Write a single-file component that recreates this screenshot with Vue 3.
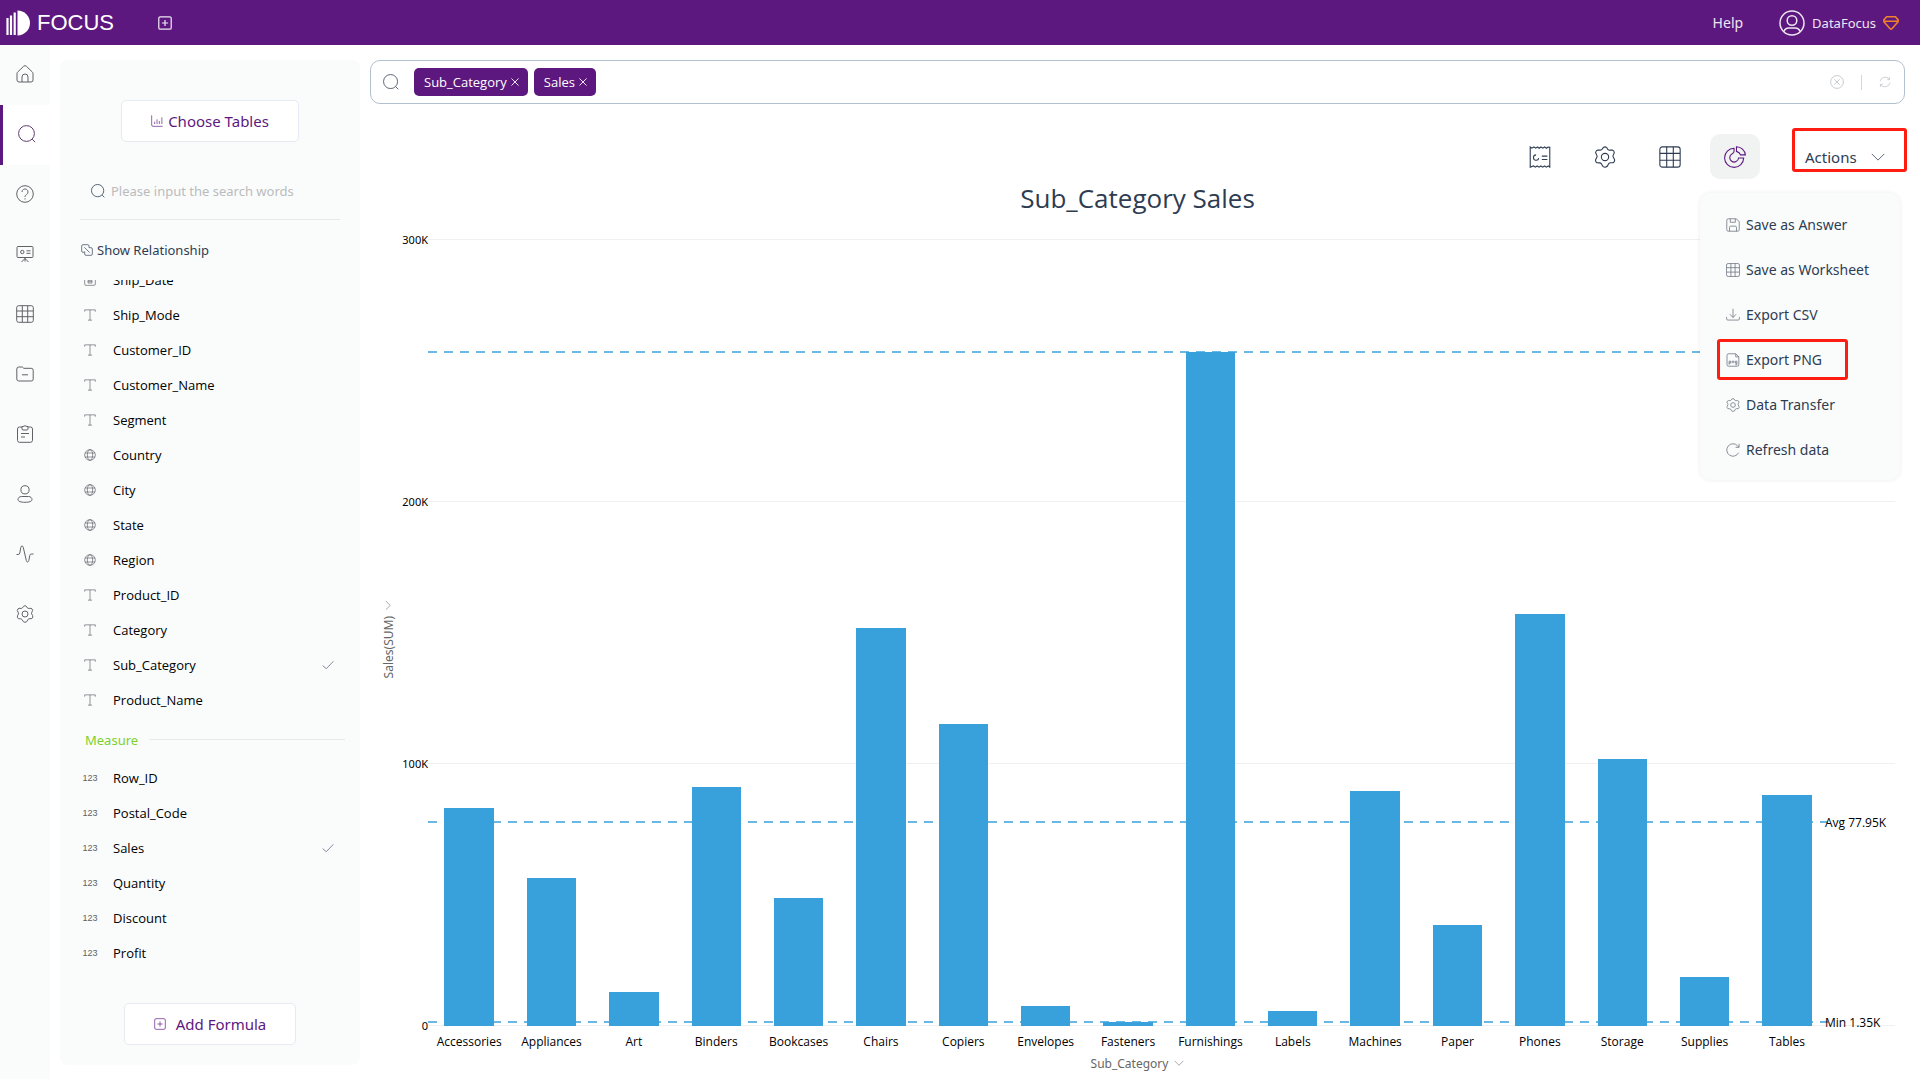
<script setup>
import { ref } from 'vue'

const railItems = [
  { icon: 'home', label: 'Home' },
  { icon: 'search', label: 'Search', active: true },
  { icon: 'help', label: 'Help center' },
  { icon: 'board', label: 'Dashboards' },
  { icon: 'grid', label: 'Data tables' },
  { icon: 'folder', label: 'Resources' },
  { icon: 'clipboard', label: 'Tasks' },
  { icon: 'user', label: 'Users' },
  { icon: 'pulse', label: 'Monitoring' },
  { icon: 'gear', label: 'Settings' },
]

const attributes = [
  { name: 'Ship_Date', type: 'date' },
  { name: 'Ship_Mode', type: 'text' },
  { name: 'Customer_ID', type: 'text' },
  { name: 'Customer_Name', type: 'text' },
  { name: 'Segment', type: 'text' },
  { name: 'Country', type: 'globe' },
  { name: 'City', type: 'globe' },
  { name: 'State', type: 'globe' },
  { name: 'Region', type: 'globe' },
  { name: 'Product_ID', type: 'text' },
  { name: 'Category', type: 'text' },
  { name: 'Sub_Category', type: 'text', used: true },
  { name: 'Product_Name', type: 'text' },
]

const measures = [
  { name: 'Row_ID' },
  { name: 'Postal_Code' },
  { name: 'Sales', used: true },
  { name: 'Quantity' },
  { name: 'Discount' },
  { name: 'Profit' },
]

const tags = ['Sub_Category', 'Sales']
const keyword = ref('')
const query = ref('')

const tools = [
  { icon: 'receipt', label: 'Summary' },
  { icon: 'gear', label: 'Chart settings' },
  { icon: 'grid', label: 'Table view' },
  { icon: 'pie', label: 'Chart view', active: true },
]

const actions = [
  { icon: 'save', label: 'Save as Answer' },
  { icon: 'grid', label: 'Save as Worksheet' },
  { icon: 'download', label: 'Export CSV' },
  { icon: 'png', label: 'Export PNG', marked: true },
  { icon: 'gear', label: 'Data Transfer' },
  { icon: 'reload', label: 'Refresh data' },
]

// Sales per sub-category, in thousands
const bars = [
  { name: 'Accessories', value: 83.3 },
  { name: 'Appliances', value: 56.4 },
  { name: 'Art', value: 13.1 },
  { name: 'Binders', value: 91.1 },
  { name: 'Bookcases', value: 48.9 },
  { name: 'Chairs', value: 152.1 },
  { name: 'Copiers', value: 115.3 },
  { name: 'Envelopes', value: 7.5 },
  { name: 'Fasteners', value: 1.35 },
  { name: 'Furnishings', value: 257.2 },
  { name: 'Labels', value: 5.7 },
  { name: 'Machines', value: 89.6 },
  { name: 'Paper', value: 38.5 },
  { name: 'Phones', value: 157.2 },
  { name: 'Storage', value: 102 },
  { name: 'Supplies', value: 18.7 },
  { name: 'Tables', value: 88.3 },
]

const axisMax = 300
const ticks = [
  { value: 300, label: '300K' },
  { value: 200, label: '200K' },
  { value: 100, label: '100K' },
  { value: 0, label: '0' },
]
const guides = [
  { value: 257.2, label: '' },
  { value: 77.95, label: 'Avg 77.95K' },
  { value: 1.35, label: 'Min 1.35K' },
]
const pct = (v) => `${(v / axisMax) * 100}%`
</script>

<template>
  <svg class="sprite" aria-hidden="true">
    <symbol id="i-home" viewBox="0 0 18 18"><path d="M1.5 7.2 7.6 1.3a2 2 0 0 1 2.8 0l6.1 5.9q.5.5.5 1.2v6.600a2 2 0 0 1-2 2H3a2 2 0 0 1-2-2V8.400q0-.7.5-1.200ZM6 17v-5a3 3 0 0 1 6 0v5" /></symbol>
    <symbol id="i-search" viewBox="0 0 18 18"><circle cx="8.500" cy="8.500" r="7.900" /><path d="m14.200 14.200 3 3" /></symbol>
    <symbol id="i-help" viewBox="0 0 18 18"><circle cx="9" cy="9" r="8.300" /><path d="M6 7a3 3 0 1 1 4.600 2.500C9.400 10.300 9 10.700 9 12M9 13.300v1.200" /></symbol>
    <symbol id="i-board" viewBox="0 0 18 18"><rect x="1" y="1.500" width="16" height="11" rx="1" /><circle cx="6.300" cy="7" r="1.700" /><path d="M10.500 5.800h4M10.500 8.300h4M9 12.500v4M9 13.500l-3.500 3.500M9 13.500l3.500 3.500" /></symbol>
    <symbol id="i-grid" viewBox="0 0 18 18"><rect x=".7" y=".7" width="16.600" height="16.600" rx="2" /><path d="M.7 6h16.600M.7 11.700h16.600M6.300.7v16.600M11.700.7v16.600" /></symbol>
    <symbol id="i-folder" viewBox="0 0 18 18"><path d="M.8 4a2 2 0 0 1 2-2h3.500l1.500 1.300h7.400a2 2 0 0 1 2 2V14a2 2 0 0 1-2 2H2.800a2 2 0 0 1-2-2ZM6 9.800h6" /></symbol>
    <symbol id="i-clipboard" viewBox="0 0 18 18"><path d="M6 2H3.500a2 2 0 0 0-2 2v11.300a2 2 0 0 0 2 2h11a2 2 0 0 0 2-2V4a2 2 0 0 0-2-2H12M6 1.500l1 0q2-1.500 4 0h1V4q-.2 1-1 1H7Q6 5 6 4ZM5 8.500h8M5 12h4" /></symbol>
    <symbol id="i-user" viewBox="0 0 18 18"><circle cx="9" cy="4.800" r="4.100" /><path d="M5.500 11.500h7c2.200 0 3.500 1.500 3.500 3 0 2-3 2.800-7 2.800s-7-.8-7-2.800c0-1.500 1.300-3 3.500-3Z" /></symbol>
    <symbol id="i-pulse" viewBox="0 0 18 18"><path d="M.5 9.500h1.700q1.300 0 1.600-1.500l1-5.500Q5 1 6 1t1.300 1.500l3 13Q10.600 17 11.500 17t1.300-1.500l1-5q.2-1.500 1.700-1.500h2" /></symbol>
    <symbol id="i-gear" viewBox="0 0 18 18"><circle cx="9" cy="9" r="3" /><path d="M7.600 1.300q1.400-1.200 2.800 0l1 1.700q.8.600 1.700.4l1.900-.1q1.600.6 1.600 2.200L15.800 7.300q-.5.800-.1 1.700l.9 1.600q.8 1.500-.7 3l-1.900.1q-1.300-.1-1.900.6l-1.300 2.300q-1.800 1.500-3.500 0L6 14.500q-.7-.8-1.600-.7l-2-.1Q.8 12.600 1.500 10.800l.9-1.800q.3-.9-.2-1.700L1.300 5.500Q1.600 3.600 3 3.300l2 .1q.9 0 1.500-.6Z" /></symbol>
    <symbol id="i-pie" viewBox="0 0 18 18"><path d="M8.200 1.900A7.800 7.800 0 1 0 16.100 9.800h-4.200a3.600 3.600 0 1 1-5.200-3.500q1.500-.7 1.500-1.800ZM10.200.6v3.800q2.700.8 3.300 2.900h4A7.500 7.500 0 0 0 10.200.6Z" /></symbol>
    <symbol id="i-receipt" viewBox="0 0 18 18"><path d="M1 17.300V.8l1.300 1L4 .8l1.500 1L7 .8l1.300 1 1.500-1 1.500 1 1.500-1 1.500 1 1.200-1L17 1v16.300l-1.300-1-1.500 1-1.500-1-1.500 1-1.500-1-1.500 1-1.500-1-1.500 1-1.500-1ZM5.800 7.300A2.200 2.200 0 1 0 8 10M10.500 8.300H15M10.500 11H15" /></symbol>
    <symbol id="i-save" viewBox="0 0 18 18"><path d="M3 1h10l4 3.500V15a2 2 0 0 1-2 2H3a2 2 0 0 1-2-2V3a2 2 0 0 1 2-2ZM5.500 1v4.500H12V1M4.500 17v-5q0-1.500 1.500-1.500h6q1.500 0 1.500 1.500v5" /></symbol>
    <symbol id="i-download" viewBox="0 0 18 18"><path d="M9 1v11M5 8l4 4.200L13 8M.8 11.500V14q0 1.500 1.500 1.500h13.400q1.500 0 1.500-1.500v-2.500" /></symbol>
    <symbol id="i-png" viewBox="0 0 18 18"><path d="M3 1h9.500L16.500 5v10a2 2 0 0 1-2 2H3.300a2 2 0 0 1-2-2V3A2 2 0 0 1 3 1ZM12.500 1v4h4M4 15v-4.500h2v2.500H4M8 13v-2.500h2V13M14 13h-2v-2.500h2V15h-2" /></symbol>
    <symbol id="i-reload" viewBox="0 0 18 18"><path d="M16.200 12.500A8 8 0 1 1 15 3.700l1.500 1.600M16.800 1v4.600h-4.500" /></symbol>
    <symbol id="i-sync" viewBox="0 0 18 18"><path d="M1.500 8A7.800 7.800 0 0 1 15.500 5M16.500 10A7.800 7.800 0 0 1 2.500 13M15.800 1.500v4h-3.500M2.200 16.500v-4h3.500" /></symbol>
    <symbol id="i-clear" viewBox="0 0 18 18"><circle cx="9" cy="9" r="8.200" /><path d="m5.500 5.500 7 7M12.500 5.500l-7 7" /></symbol>
    <symbol id="i-plus-box" viewBox="0 0 18 18"><rect x="1" y="1" width="16" height="16" rx="2" /><path d="M9 5v8M5 9h8" /></symbol>
    <symbol id="i-chart" viewBox="0 0 18 18"><path d="M1 .5V15q0 2 2 2h14.500M5.500 13.500V10M9 13.500V6.500M12.500 13.500V9M16.300 13.500V3.500" /></symbol>
    <symbol id="i-relation" viewBox="0 0 18 18"><path d="M5 12.500H3a2 2 0 0 1-2-2V3a2 2 0 0 1 2-2h7a2 2 0 0 1 2 2v2.500H15a2 2 0 0 1 2 2V15a2 2 0 0 1-2 2H7.500a2 2 0 0 1-2-2v-4M5 5l8 8" /></symbol>
    <symbol id="i-date" viewBox="0 0 18 18"><rect x="1" y="2.500" width="16" height="14.500" rx="2" /><path d="M1 7h16M5 .5v4M13 .5v4M6 9.500h6v4H6ZM6 11.500h6" /></symbol>
    <symbol id="i-text" viewBox="0 0 18 18"><path d="M1 4V1.300h16V4M9 1.300v15.400M6 16.700h6" /></symbol>
    <symbol id="i-globe" viewBox="0 0 18 18"><circle cx="9" cy="9" r="8" /><ellipse cx="9" cy="9" rx="4" ry="8" /><path d="M1.500 6h15M1.500 12h15" /></symbol>
    <symbol id="i-check" viewBox="0 0 18 18"><path d="m1 10 5.500 4.500L17 3.500" /></symbol>
    <symbol id="i-down" viewBox="0 0 18 18"><path d="m1 5 8 8 8-8" /></symbol>
    <symbol id="i-cross" viewBox="0 0 18 18"><path d="m1 1 16 16M17 1 1 17" /></symbol>
    <symbol id="i-avatar" viewBox="0 0 26 26"><circle cx="13" cy="13" r="12" /><circle cx="13" cy="10.500" r="4.800" /><path d="M5 21.500q1-3.500 5-3.500h6q4 0 5 3.500" /></symbol>
    <symbol id="i-gem" viewBox="0 0 18 18"><path d="M4 2h10l3 3.500v2L10 15.500q-1 1-2 0L1 7.500v-2ZM1.500 7h15" /></symbol>
  </svg>

  <div class="app">
    <header class="topbar">
      <a class="brand" href="#">
        <svg class="logo" viewBox="0 0 25 26" aria-hidden="true">
          <path d="M1.500 8v17M5 5.500V25M8.700 2.500V25" stroke="#fff" stroke-width="2.200" fill="none" />
          <path d="M11.500.5a12.500 12.500 0 0 1 0 25Z" fill="#fff" />
        </svg>
        <span>FOCUS</span>
      </a>
      <button class="bare new-tab" aria-label="New"><svg class="icon"><use href="#i-plus-box" /></svg></button>
      <a class="help" href="#">Help</a>
      <a class="account" href="#">
        <svg class="icon avatar"><use href="#i-avatar" /></svg>
        <span>DataFocus</span>
        <svg class="icon gem"><use href="#i-gem" /></svg>
      </a>
    </header>

    <div class="body">
      <nav class="rail">
        <a v-for="r in railItems" :key="r.icon" href="#" :class="{ active: r.active }" :aria-label="r.label">
          <svg class="icon"><use :href="`#i-${r.icon}`" /></svg>
        </a>
      </nav>

      <aside class="panel">
        <button class="outline choose"><svg class="icon"><use href="#i-chart" /></svg>Choose Tables</button>
        <label class="finder">
          <svg class="icon"><use href="#i-search" /></svg>
          <input v-model="keyword" type="text" placeholder="Please input the search words" />
        </label>
        <button class="bare relation"><svg class="icon"><use href="#i-relation" /></svg>Show Relationship</button>
        <div class="fields">
          <ul class="attributes">
            <li v-for="f in attributes" :key="f.name">
              <span class="type"><svg class="icon"><use :href="`#i-${f.type}`" /></svg></span>
              <span class="name">{{ f.name }}</span>
              <svg v-if="f.used" class="icon check"><use href="#i-check" /></svg>
            </li>
          </ul>
          <h2 class="group">Measure</h2>
          <ul>
            <li v-for="f in measures" :key="f.name">
              <span class="type">123</span>
              <span class="name">{{ f.name }}</span>
              <svg v-if="f.used" class="icon check"><use href="#i-check" /></svg>
            </li>
          </ul>
        </div>
        <button class="outline formula"><svg class="icon"><use href="#i-plus-box" /></svg>Add Formula</button>
      </aside>

      <main class="main">
        <div class="searchbar">
          <svg class="icon lens"><use href="#i-search" /></svg>
          <span v-for="t in tags" :key="t" class="tag">
            {{ t }}
            <button class="bare" :aria-label="`Remove ${t}`"><svg class="icon"><use href="#i-cross" /></svg></button>
          </span>
          <input v-model="query" type="text" aria-label="Search query" />
          <button class="bare" aria-label="Clear"><svg class="icon"><use href="#i-clear" /></svg></button>
          <span class="sep"></span>
          <button class="bare" aria-label="Refresh"><svg class="icon sync"><use href="#i-sync" /></svg></button>
        </div>

        <div class="toolbar">
          <button v-for="t in tools" :key="t.icon" class="bare tool" :class="{ active: t.active }" :aria-label="t.label">
            <svg class="icon"><use :href="`#i-${t.icon}`" /></svg>
          </button>
          <div class="actions">
            <button class="bare actions-button">Actions<svg class="icon"><use href="#i-down" /></svg></button>
            <div class="menu">
              <button v-for="a in actions" :key="a.label" class="bare" :class="{ marked: a.marked }">
                <svg class="icon"><use :href="`#i-${a.icon}`" /></svg>{{ a.label }}
              </button>
            </div>
          </div>
        </div>

        <h1 class="title">Sub_Category Sales</h1>

        <section class="chart">
          <button class="bare axis-y">Sales(SUM)<svg class="icon"><use href="#i-down" /></svg></button>
          <div class="plot">
            <div v-for="t in ticks" :key="t.value" class="tick" :style="{ bottom: pct(t.value) }">
              <span>{{ t.label }}</span>
            </div>
            <div class="series">
              <div v-for="b in bars" :key="b.name" class="slot">
                <div class="bar" :style="{ height: pct(b.value) }"></div>
              </div>
              <div v-for="g in guides" :key="g.value" class="guide" :style="{ bottom: pct(g.value) }">
                <span>{{ g.label }}</span>
              </div>
            </div>
          </div>
          <div class="categories">
            <span v-for="b in bars" :key="b.name">{{ b.name }}</span>
          </div>
          <button class="bare axis-x">Sub_Category<svg class="icon"><use href="#i-down" /></svg></button>
        </section>
      </main>
    </div>
  </div>
</template>

<style>
body {
  margin: 0;
  background: #fff;
}
</style>

<style scoped>
.app {
  display: flex;
  flex-direction: column;
  min-height: 100vh;
  font-family: "Noto Sans", "Open Sans", sans-serif;
  font-size: 13px;
  color: #2e3c52;
}
.fields,
.tag,
.title,
.categories,
.guide {
  font-family: "Open Sans", "Noto Sans", sans-serif;
}
.app *,
.app *::before,
.app *::after {
  box-sizing: border-box;
}
.sprite {
  position: absolute;
  width: 0;
  height: 0;
}
.icon {
  flex: none;
  width: 14px;
  height: 14px;
  fill: none;
  stroke: currentColor;
  stroke-width: 1;
}
a {
  color: inherit;
  text-decoration: none;
}
button,
input {
  font: inherit;
  color: inherit;
}
.bare {
  display: flex;
  align-items: center;
  padding: 0;
  border: 0;
  background: none;
}
ul {
  margin: 0;
  padding: 0;
  list-style: none;
}

.topbar {
  display: flex;
  align-items: center;
  height: 45px;
  padding: 0 21px 0 6px;
  background: #5d187f;
  color: #eee6f2;
}
.brand {
  display: flex;
  align-items: center;
  gap: 6px;
  color: #fff;
  font: 22px "Liberation Sans", Arial, sans-serif;
}
.logo {
  width: 25px;
  height: 26px;
}
.new-tab {
  margin-left: 44px;
}
.new-tab .icon {
  stroke-width: 1.6;
}
.help {
  margin-left: auto;
  font-size: 14px;
}
.account {
  display: flex;
  align-items: center;
  gap: 7px;
  margin-left: 36px;
}
.avatar {
  width: 26px;
  height: 26px;
  stroke-width: 1.5;
}
.gem {
  width: 16px;
  height: 16px;
  color: #f0802c;
  stroke-width: 1.8;
}

.body {
  display: flex;
  flex: 1;
}
.rail {
  flex: none;
  width: 50px;
  background: #fafcfc;
  color: #606266;
}
.rail a {
  display: flex;
  align-items: center;
  justify-content: center;
  height: 60px;
  padding-bottom: 2px;
}
.rail a.active {
  border-left: 3px solid #5d187f;
  background: #fff;
  color: #5d3a70;
}
.rail .icon {
  width: 18px;
  height: 18px;
}

.panel {
  display: flex;
  flex: none;
  flex-direction: column;
  align-items: center;
  width: 300px;
  margin: 15px 10px 14px;
  padding: 40px 15px 20px 20px;
  border-radius: 8px;
  background: #fafcfc;
}
.outline {
  display: flex;
  align-items: center;
  justify-content: center;
  height: 42px;
  margin-right: 5px;
  border: 1px solid #e6eaf2;
  border-radius: 5px;
  background: #fff;
  color: #5d187f;
  font-size: 15px;
}
.outline .icon {
  width: 12px;
  height: 12px;
}
.choose {
  gap: 5px;
  width: 178px;
}
.formula {
  gap: 10px;
  width: 172px;
  margin-top: auto;
}
.finder {
  display: flex;
  align-items: center;
  align-self: stretch;
  gap: 6px;
  height: 56px;
  margin: 22px 5px 0 0;
  padding: 0 10px 2px 11px;
  border-bottom: 1px solid #e6eaec;
}
.finder input {
  flex: 1;
  min-width: 0;
  padding: 0;
  border: 0;
  outline: 0;
  background: none;
}
.finder input::placeholder {
  color: #bbb;
}
.relation {
  align-self: stretch;
  gap: 4px;
  height: 60px;
  padding-left: 1px;
}
.relation .icon {
  width: 12px;
  height: 12px;
}
.fields {
  align-self: stretch;
  overflow: hidden;
}
.attributes {
  margin-top: -18px;
}
li {
  display: flex;
  align-items: center;
  height: 35px;
  padding: 0 11px 0 0;
  color: #000;
}
.type {
  display: flex;
  justify-content: center;
  width: 20px;
  margin-right: 13px;
  color: #5c6066;
  font: 9px "Liberation Sans", sans-serif;
}
.type .icon,
.check {
  width: 12px;
  height: 12px;
}
.name {
  flex: 1;
}
.check {
  color: #5d4570;
}
.group {
  display: flex;
  align-items: center;
  gap: 11px;
  height: 43px;
  margin: 0;
  padding: 2px 0 0 5px;
  color: #7fd02c;
  font-family: "Noto Sans", "Open Sans", sans-serif;
  font-size: 13px;
  font-weight: 400;
}
.group::after {
  content: "";
  flex: 1;
  height: 1px;
  background: #e6eaec;
}

.main {
  display: flex;
  flex: 1;
  flex-direction: column;
  min-width: 0;
  padding: 15px 15px 8px 0;
}
.searchbar {
  display: flex;
  align-items: center;
  height: 44px;
  padding: 0 13px 0 12px;
  border: 1px solid #b2c0d0;
  border-radius: 10px;
  color: #b8bcc2;
}
.lens {
  width: 16px;
  height: 16px;
  margin-right: 15px;
  color: #4c5462;
}
.tag {
  display: flex;
  align-items: center;
  gap: 4px;
  height: 28px;
  margin-right: 6px;
  padding: 0 9px 0 10px;
  border-radius: 5px;
  background: #5d187f;
  color: #fff;
}
.tag .icon {
  width: 8px;
  height: 8px;
  stroke-width: 2;
}
.searchbar input {
  flex: 1;
  min-width: 0;
  padding: 0;
  border: 0;
  outline: 0;
  background: none;
  color: #2e3c52;
}
.sep {
  width: 1px;
  height: 15px;
  margin: 0 17px;
  background: #d4d7dc;
}
.sync {
  width: 12px;
  height: 12px;
}

.toolbar {
  display: flex;
  align-items: center;
  justify-content: flex-end;
  gap: 15px;
  margin-top: 30px;
}
.tool {
  justify-content: center;
  width: 50px;
  height: 45px;
  border-radius: 10px;
}
.tool .icon {
  width: 22px;
  height: 22px;
  stroke-width: 0.9;
}
.tool.active {
  background: #f1f3f3;
  color: #5d187f;
}
.actions {
  position: relative;
  margin-left: 15px;
}
.actions-button {
  position: relative;
  gap: 14px;
  width: 115px;
  height: 45px;
  padding-left: 15px;
  font-size: 15px;
}
.actions-button::after,
.marked::after {
  content: "";
  position: absolute;
  inset: 2px 0 2px 12px;
  border: 3px solid #ff1c10;
  border-radius: 3px;
}
.actions-button::after {
  inset: -6px -2px 7px 2px;
}
.menu {
  position: absolute;
  z-index: 2;
  top: 59px;
  right: 5px;
  width: 200px;
  padding: 9px 5px 8px;
  border-radius: 10px;
  background: #fafcfc;
  box-shadow: 0 0 4px rgba(0, 0, 0, 0.08);
}
.menu button {
  position: relative;
  gap: 6px;
  width: 143px;
  height: 45px;
  padding-left: 21px;
  font-size: 14px;
  white-space: nowrap;
}
.menu .icon {
  color: #6c7280;
}

.title {
  margin: 0;
  height: 61px;
  font-size: 26px;
  font-weight: 400;
  line-height: 39px;
  text-align: center;
}
.chart {
  display: grid;
  flex: 1;
  grid-template: 1fr 29px 16px / 58px 1fr;
  padding-right: 10px;
  color: #000;
  font-size: 12px;
}
.axis-y {
  align-self: center;
  justify-self: start;
  gap: 6px;
  margin: 12px 0 0 10px;
  color: #666;
  writing-mode: vertical-rl;
  transform: rotate(180deg);
}
.axis-x {
  grid-column: 1 / 3;
  justify-self: center;
  gap: 6px;
  height: 16px;
  margin-right: -10px;
  color: #666;
}
.axis-y .icon {
  width: 10px;
  height: 10px;
  transform: rotate(90deg);
}
.axis-x .icon {
  width: 10px;
  height: 10px;
}
.plot {
  position: relative;
}
.tick {
  position: absolute;
  right: 0;
  left: 0;
  height: 1px;
  background: #f0f0f0;
}
.tick span {
  position: absolute;
  top: -8px;
  right: 100%;
  font-size: 11px;
  line-height: 18px;
}
.series {
  position: absolute;
  inset: 0 67px 0 0;
  display: flex;
}
.slot {
  display: flex;
  flex: 1;
  align-items: flex-end;
  justify-content: center;
  min-width: 0;
}
.bar {
  width: 60%;
  background: #38a1db;
}
.guide {
  position: absolute;
  right: 0;
  left: 0;
  height: 2px;
  margin-bottom: -1px;
  background: repeating-linear-gradient(90deg, rgba(56, 161, 219, 0.75) 0 9px, transparent 9px 16px);
}
.guide span {
  position: absolute;
  top: -7px;
  left: 100%;
  margin-left: -3px;
  line-height: 18px;
  white-space: nowrap;
}
.categories {
  display: flex;
  grid-column: 2;
  padding-right: 67px;
}
.categories span {
  flex: 1;
  width: 0;
  line-height: 32px;
  text-align: center;
}
</style>
